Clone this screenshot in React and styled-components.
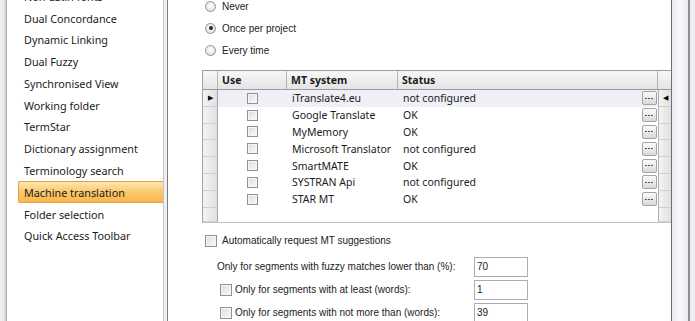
import React from 'react'
import styled, { createGlobalStyle } from 'styled-components'

const Global = createGlobalStyle`
  html, body { margin: 0; padding: 0; background: #fff; overflow: hidden; }
  #root { width: 695px; height: 321px; }
`

const Window = styled.div`
  display: flex;
  width: 695px;
  height: 321px;
  overflow: hidden;
  background: #fff;
  color: #1b1b1b;
`

const Frame = styled.div`
  flex: 0 0 ${({ w }) => w}px;
  background: ${({ bg }) => bg};
  box-sizing: border-box;
`

const Sidebar = styled.div`
  flex: 0 0 158px;
  box-sizing: border-box;
  border-left: 1px solid #a9abb0;
  border-right: 1px solid #c3c3c3;
  background: #fff;
  overflow: hidden;
`

const NavList = styled.div`
  display: flex;
  flex-direction: column;
  margin-top: -14.7px;
  padding-left: 11px;
`

const NavItem = styled.div`
  height: 21.8px;
  flex-shrink: 0;
  display: flex;
  align-items: center;
  box-sizing: border-box;
  padding-left: 5px;
  font-family: 'Noto Sans', sans-serif;
  font-size: 10.8px;
  white-space: nowrap;
  border: 1px solid ${({ active }) => (active ? '#e9a13f' : 'transparent')};
  border-right: none;
  border-radius: 2px 0 0 2px;
  background: ${({ active }) =>
    active
      ? 'linear-gradient(to bottom, #fde6b2 0%, #fbcb70 45%, #f8b64c 100%)'
      : 'transparent'};
`

const Content = styled.div`
  flex: 0 0 505px;
  box-sizing: border-box;
  border-left: 1px solid #7b7b7b;
  border-right: 1px solid #6e6e70;
  background: #fff;
  overflow: hidden;
  display: flex;
  flex-direction: column;
  font-family: 'Liberation Sans', Arial, sans-serif;
  font-size: 10px;
  & > * {
    flex-shrink: 0;
  }
`

const RadioGroup = styled.div`
  margin-top: -5px;
  padding-left: 37px;
  display: flex;
  flex-direction: column;
`

const RadioRow = styled.label`
  height: 22px;
  display: flex;
  align-items: center;
  gap: 6px;
`

const Radio = styled.span`
  width: 11px;
  height: 11px;
  border-radius: 50%;
  box-sizing: border-box;
  border: 1px solid #8d9095;
  background: radial-gradient(circle at 50% 40%, #ffffff 0%, #e4e4e4 70%, #cfcfcf 100%);
  display: flex;
  align-items: center;
  justify-content: center;
  &::after {
    content: '';
    width: 4px;
    height: 4px;
    border-radius: 50%;
    background: ${({ checked }) => (checked ? '#2a2a2a' : 'transparent')};
  }
`

const GridBox = styled.div`
  margin: 9px 0 0 34px;
  border-top: 1px solid #9c9c9c;
  border-left: 1px solid #a3a3a3;
  border-bottom: 1px solid #c2c2c2;
  font-family: 'Noto Sans', sans-serif;
  font-size: 10.5px;
  overflow: hidden;
`

const cols = '15px 69px 111px 242px 18px 13px'

const HeaderRow = styled.div`
  display: grid;
  grid-template-columns: ${cols};
  height: 18px;
  border-bottom: 1px solid #9a9a9a;
  background: linear-gradient(to bottom, #f7f7f7, #e4e4e4);
`

const HeadCell = styled.div`
  display: flex;
  align-items: center;
  padding-left: 4px;
  font-weight: 700;
  border-right: ${({ sep }) => (sep ? '1px solid #b5b5b5' : 'none')};
  white-space: nowrap;
  overflow: hidden;
`

const Row = styled.div`
  display: grid;
  grid-template-columns: ${cols};
  height: ${({ h }) => h || 16.8}px;
  background: ${({ current }) => (current ? '#eef0f5' : '#fff')};
`

const Selector = styled.div`
  box-sizing: border-box;
  border-right: 1px solid #a6a6a6;
  border-bottom: 1px solid #cfcfcf;
  background: linear-gradient(to right, #f4f4f4, #e0e0e0);
  display: flex;
  align-items: center;
  justify-content: center;
  font-size: 7px;
  color: #000;
  ${({ last }) => last && 'border-left: 1px solid #b0b0b0; border-right: none;'}
`

const Cell = styled.div`
  display: flex;
  align-items: center;
  justify-content: ${({ center }) => (center ? 'center' : 'flex-start')};
  padding-left: ${({ center }) => (center ? 0 : 5)}px;
  white-space: nowrap;
  overflow: hidden;
`

const Check = styled.span`
  width: ${({ size }) => size || 11}px;
  height: ${({ size }) => size || 11}px;
  box-sizing: border-box;
  flex: 0 0 auto;
  border: 1px solid #8f9296;
  background: linear-gradient(135deg, #dcdcdc 0%, #efefef 60%, #fafafa 100%);
  box-shadow: inset 0 0 0 1px #f6f6f6;
`

const DotsButton = styled.div`
  width: 15px;
  height: 14px;
  box-sizing: border-box;
  border: 1px solid #a3a3a3;
  border-radius: 2px;
  background: linear-gradient(to bottom, #fbfbfb, #d9d9d9);
  display: flex;
  align-items: center;
  justify-content: center;
  gap: 1px;
`

const Dot = styled.span`
  width: 2px;
  height: 1px;
  background: #555;
`

const AutoRow = styled.label`
  margin: 8px 0 0 37px;
  height: 20px;
  display: flex;
  align-items: center;
  gap: 5px;
`

const Options = styled.div`
  margin: 6px 0 0 49px;
  display: flex;
  flex-direction: column;
  gap: 3px;
`

const OptionRow = styled.div`
  display: grid;
  grid-template-columns: 257px 54px;
  height: 20px;
  align-items: center;
`

const OptionLabel = styled.label`
  display: flex;
  align-items: center;
  gap: 3px;
  padding-left: ${({ indent }) => (indent ? 3 : 0)}px;
  white-space: nowrap;
`

const NumberBox = styled.div`
  height: 20px;
  box-sizing: border-box;
  border: 1px solid #abadb3;
  padding: 3px 2px;
  line-height: 12px;
  background: #fff;
`

const navItems = [
  'Non-Latin fonts',
  'Dual Concordance',
  'Dynamic Linking',
  'Dual Fuzzy',
  'Synchronised View',
  'Working folder',
  'TermStar',
  'Dictionary assignment',
  'Terminology search',
  'Machine translation',
  'Folder selection',
  'Quick Access Toolbar',
]

const systems = [
  ['iTranslate4.eu', 'not configured'],
  ['Google Translate', 'OK'],
  ['MyMemory', 'OK'],
  ['Microsoft Translator', 'not configured'],
  ['SmartMATE', 'OK'],
  ['SYSTRAN Api', 'not configured'],
  ['STAR MT', 'OK'],
]

const App = () => {
  return (
    <>
      <Global />
      <Window>
        <Frame w={6} bg="linear-gradient(to right, #f3f3f6, #e4e4e9 70%, #c9cace)" />
        <Sidebar>
          <NavList>
            {navItems.map((n) => (
              <NavItem key={n} active={n === 'Machine translation'}>
                {n}
              </NavItem>
            ))}
          </NavList>
        </Sidebar>
        <Frame w={3} bg="#efeff1" />
        <Content>
          <RadioGroup>
            <RadioRow><Radio />Never</RadioRow>
            <RadioRow><Radio checked />Once per project</RadioRow>
            <RadioRow><Radio />Every time</RadioRow>
          </RadioGroup>

          <GridBox>
            <HeaderRow>
              <HeadCell sep />
              <HeadCell sep>Use</HeadCell>
              <HeadCell sep>MT system</HeadCell>
              <HeadCell>Status</HeadCell>
              <HeadCell sep />
              <HeadCell />
            </HeaderRow>
            {systems.map(([name, status], i) => (
              <Row key={name} current={i === 0}>
                <Selector>{i === 0 ? '▶' : ''}</Selector>
                <Cell center><Check /></Cell>
                <Cell>{name}</Cell>
                <Cell>{status}</Cell>
                <Cell center>
                  <DotsButton><Dot /><Dot /><Dot /></DotsButton>
                </Cell>
                <Selector last>{i === 0 ? '◀' : ''}</Selector>
              </Row>
            ))}
            <Row h={14.4}>
              <Selector />
              <Cell />
              <Cell />
              <Cell />
              <Cell />
              <Selector last />
            </Row>
          </GridBox>

          <AutoRow><Check size={12} />Automatically request MT suggestions</AutoRow>

          <Options>
            <OptionRow>
              <OptionLabel>Only for segments with fuzzy matches lower than (%):</OptionLabel>
              <NumberBox>70</NumberBox>
            </OptionRow>
            <OptionRow>
              <OptionLabel indent><Check size={12} />Only for segments with at least (words):</OptionLabel>
              <NumberBox>1</NumberBox>
            </OptionRow>
            <OptionRow>
              <OptionLabel indent><Check size={12} />Only for segments with not more than (words):</OptionLabel>
              <NumberBox>39</NumberBox>
            </OptionRow>
          </Options>
        </Content>
        <Frame w={16} bg="linear-gradient(to right, #ebe9ee, #f8f7fa 50%, #ebe9ee)" />
        <Frame w={2} bg="#8e8e92" />
        <Frame w={5} bg="#efedf1" />
      </Window>
    </>
  )
}

export default App
